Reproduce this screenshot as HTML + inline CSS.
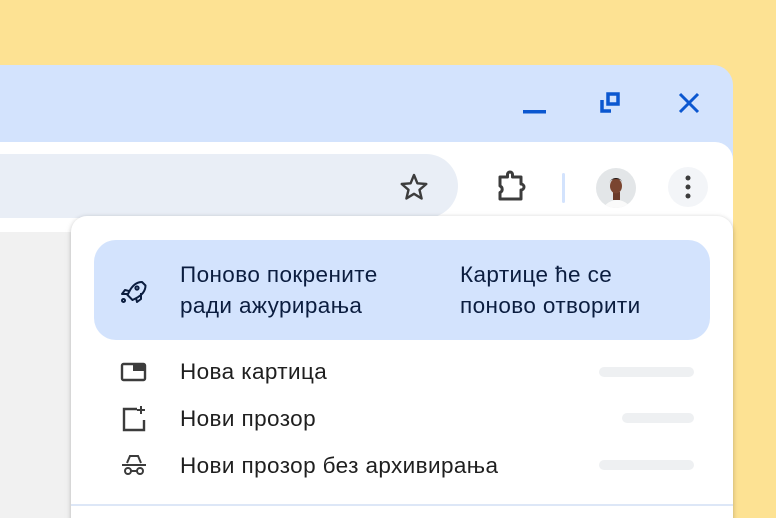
<!DOCTYPE html>
<html><head><meta charset="utf-8"><style>
*{margin:0;padding:0;box-sizing:border-box}
html,body{width:776px;height:518px;overflow:hidden}
body{background:#fde293;font-family:"Liberation Sans","DejaVu Sans",sans-serif;position:relative}
.win{position:absolute;left:-20px;top:65px;width:753px;height:460px;background:#d3e3fd;border-top-right-radius:20px;overflow:hidden}
.tool{position:absolute;left:0;top:142px;width:733px;height:376px;background:#fff;border-top-right-radius:18px}
.omni{position:absolute;left:-40px;top:154px;width:498px;height:64px;background:#e9eef6;border-radius:32px}
.content{position:absolute;left:0;top:232px;width:733px;height:286px;background:#f1f1f1}
.menu{position:absolute;left:71px;top:216px;width:662px;height:320px;background:#fff;border-radius:16px;box-shadow:0 1px 4px rgba(0,0,0,.18),0 2px 8px rgba(0,0,0,.08)}
.hl{position:absolute;left:94px;top:240px;width:616px;height:100px;background:#d3e3fd;border-radius:22px}
.t{position:absolute;font-size:22.5px;letter-spacing:0.4px;line-height:31px;color:#1f1f1f;white-space:nowrap}
.n{color:#0b1d3f}
.bar{position:absolute;height:10px;background:#eef0f2;border-radius:5px}
</style></head><body>
<div class="win"></div>
<svg style="position:absolute;left:0;top:0" width="776" height="518">
<rect x="523" y="110" width="23" height="3.5" fill="#0b57d0"/>
<path d="M602 100v11h9" stroke="#0b57d0" stroke-width="3.5" fill="none"/>
<rect x="608" y="94" width="10" height="10" stroke="#0b57d0" stroke-width="3.5" fill="none"/>
<path d="M680 94l18 18M698 94l-18 18" stroke="#0b57d0" stroke-width="3"/>
</svg>
<div class="tool"></div>
<div class="omni"></div>
<div class="content"></div>
<svg style="position:absolute;left:0;top:0" width="776" height="518">
<path d="M414 175l3.4 8.3 8.9.7-6.8 5.8 2.1 8.7-7.6-4.7-7.6 4.7 2.1-8.7-6.8-5.8 8.9-.7z" fill="none" stroke="#3c3c3c" stroke-width="2.4" stroke-linejoin="round"/>
<path d="M500 177h7.5v-2.5a2.5 2.5 0 0 1 5 0v2.5h8.5v7a2.5 2.5 0 0 1 0 6v9h-21v-6.5a3.5 3.5 0 0 0 0-6.5z" fill="none" stroke="#3c3c3c" stroke-width="3" stroke-linejoin="round"/>
<rect x="562" y="173" width="3" height="30" rx="1.5" fill="#d3e3fd"/>
<circle cx="688" cy="187" r="20" fill="#f3f5f8"/>
<circle cx="688" cy="178" r="2.5" fill="#3c3c3c"/><circle cx="688" cy="187" r="2.5" fill="#3c3c3c"/><circle cx="688" cy="196" r="2.5" fill="#3c3c3c"/>
<defs><clipPath id="c"><circle cx="616" cy="188" r="20"/></clipPath></defs>
<g clip-path="url(#c)"><rect x="596" y="168" width="40" height="40" fill="#e3e6e8"/>
<ellipse cx="617" cy="214" rx="15" ry="14" fill="#fafafa"/>
<rect x="613" y="192" width="7" height="8" fill="#6b3b2a"/>
<ellipse cx="616" cy="186" rx="6" ry="7.5" fill="#7a4530"/>
<path d="M609.5 184c0-8 13-8 13 0 0-3-2-5-6.5-5s-6.5 2-6.5 5z" fill="#1d1210"/></g>
</svg>
<div class="menu"></div>
<div class="hl"></div>
<svg style="position:absolute;left:0;top:0" width="776" height="518">
<g fill="none" stroke="#0b1d3f" stroke-width="2" stroke-linejoin="round">
<path d="M142 282c-6 0-10 4-13 10l-1.5 3 5 5 3-1.5c6-3 10-7 10-13z"/>
<path d="M129 291l-4-1-3 4h6M136 298l1 4 4-3v-6"/>
<circle cx="123.5" cy="300.5" r="1.5"/>
<circle cx="137" cy="288" r="1.6"/>
</g>
<rect x="122" y="364" width="23" height="16" rx="1.5" fill="none" stroke="#3c3c3c" stroke-width="2.4"/>
<rect x="133" y="364" width="12" height="7" fill="#3c3c3c"/>
<path d="M137 409h-13v21h20v-10" fill="none" stroke="#3c3c3c" stroke-width="2.4"/>
<path d="M141 406v8M137 410h8" stroke="#3c3c3c" stroke-width="2"/>
<path d="M127 463l3-7h8l3 7" fill="none" stroke="#3c3c3c" stroke-width="2"/>
<path d="M122 465h24" stroke="#3c3c3c" stroke-width="2"/>
<circle cx="128" cy="471" r="3" fill="none" stroke="#3c3c3c" stroke-width="2"/>
<circle cx="140" cy="471" r="3" fill="none" stroke="#3c3c3c" stroke-width="2"/>
<path d="M131 471h6" stroke="#3c3c3c" stroke-width="2"/>
<rect x="71" y="504" width="662" height="2" fill="#dde7f7"/>
</svg>
<div class="t n" style="left:180px;top:259px">Поново покрените<br>ради ажурирања</div>
<div class="t n" style="left:460px;top:259px">Картице ће се<br>поново отворити</div>
<div class="t" style="left:180px;top:356px">Нова картица</div>
<div class="t" style="left:180px;top:403px">Нови прозор</div>
<div class="t" style="left:180px;top:450px">Нови прозор без архивирања</div>
<div class="bar" style="left:599px;top:367px;width:95px"></div>
<div class="bar" style="left:622px;top:413px;width:72px"></div>
<div class="bar" style="left:599px;top:460px;width:95px"></div>
</body></html>
